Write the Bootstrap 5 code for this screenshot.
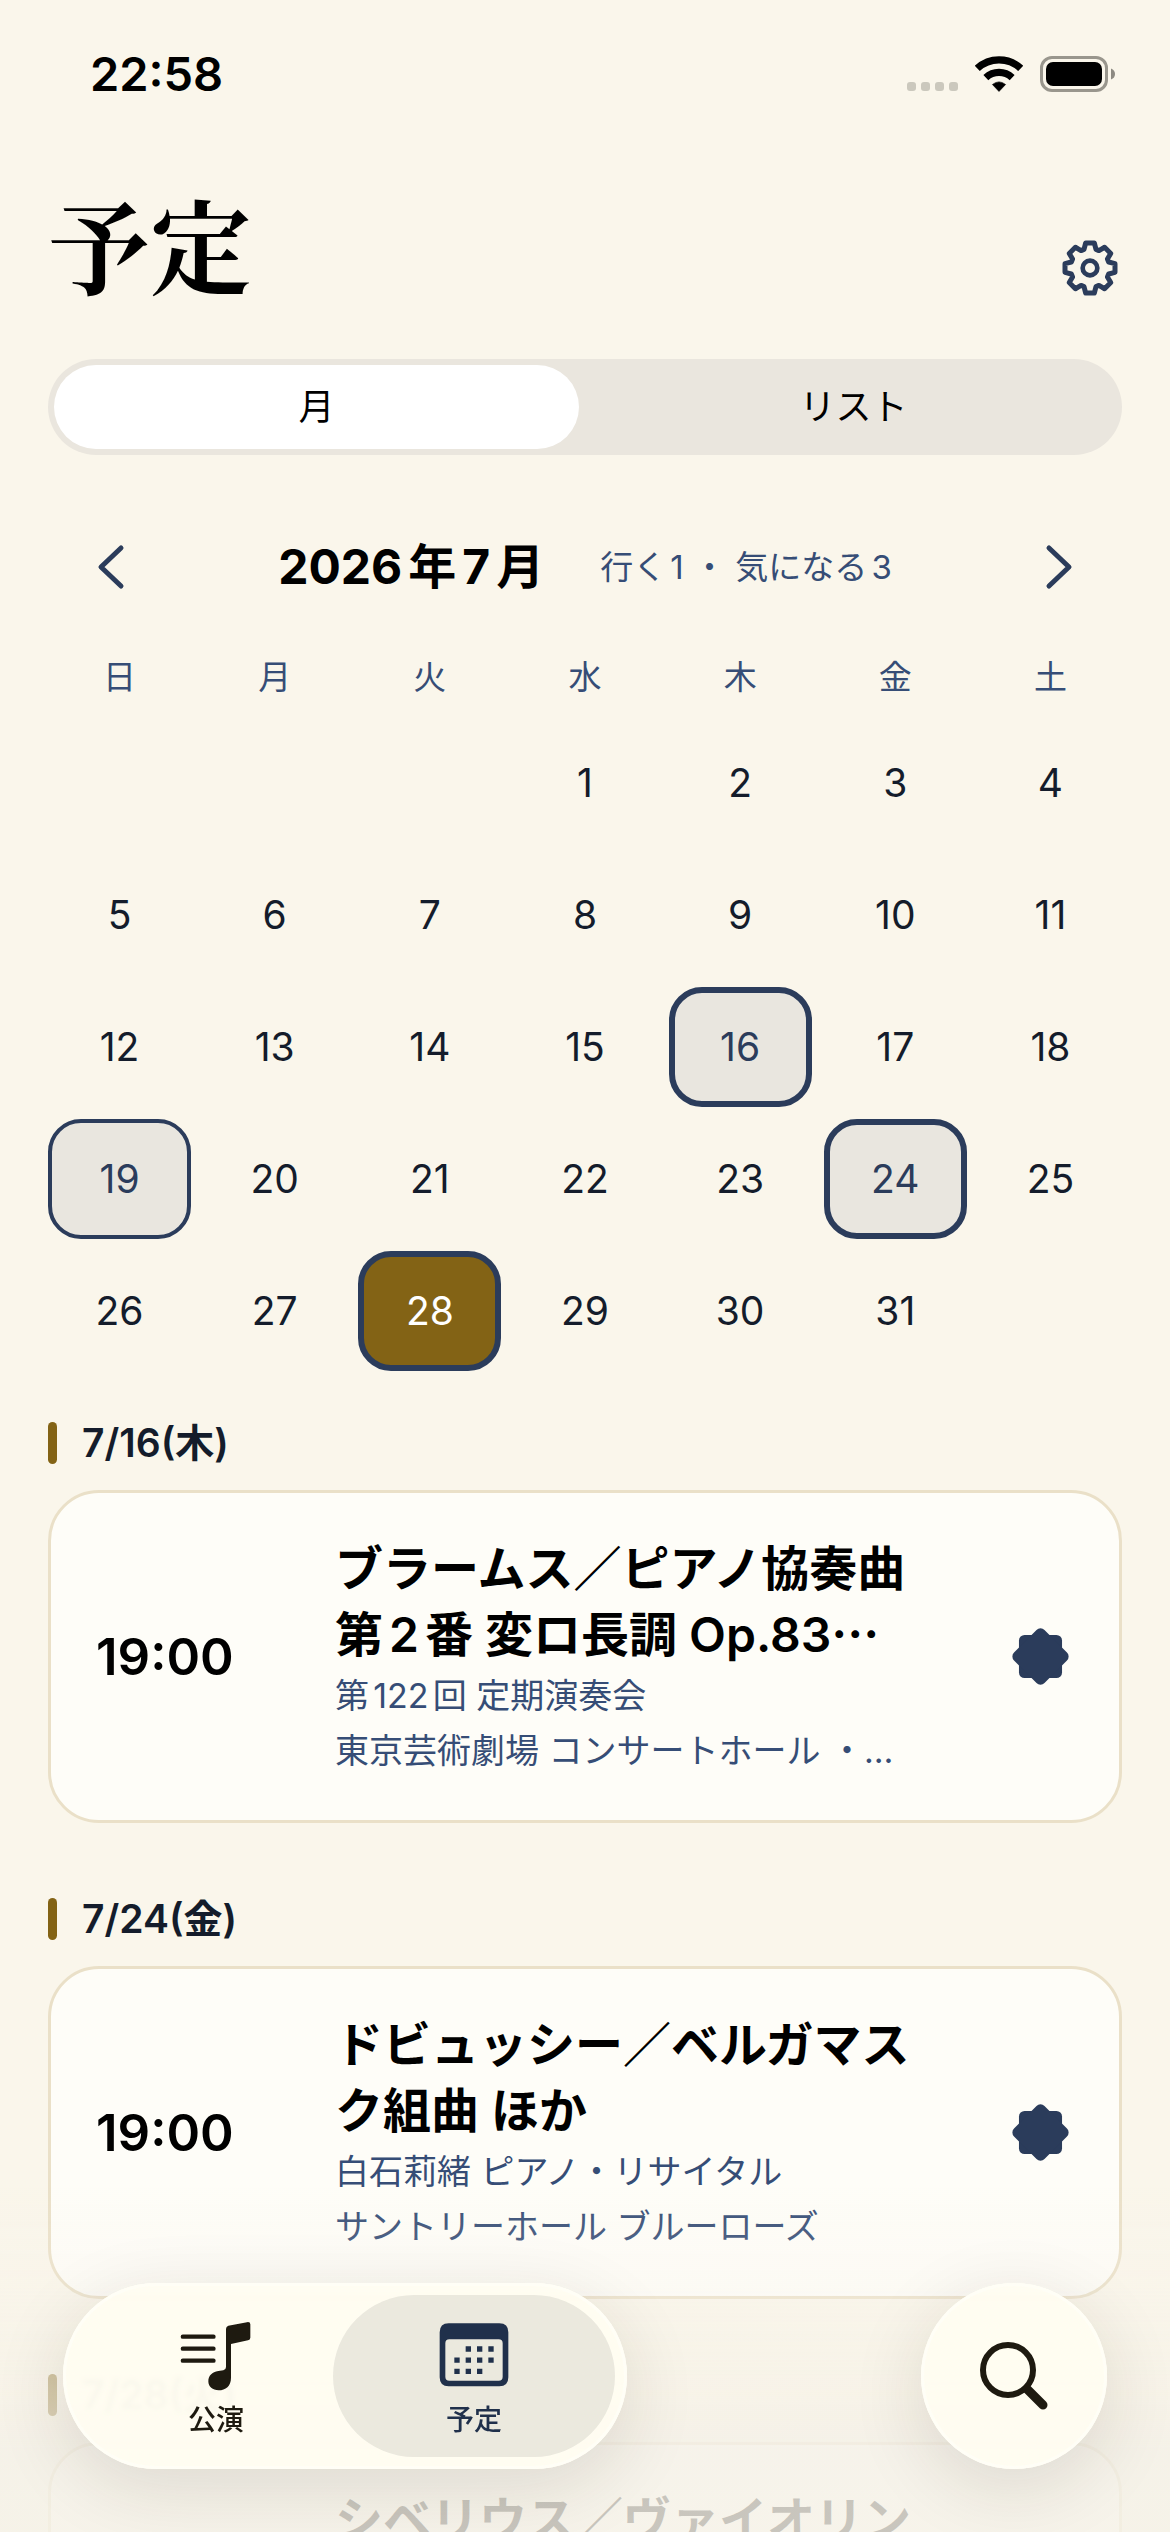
<!DOCTYPE html>
<html lang="ja">
<head>
<meta charset="utf-8">
<meta name="viewport" content="width=device-width, initial-scale=1">
<title>予定</title>
<link href="https://cdn.jsdelivr.net/npm/bootstrap@5.3.0/dist/css/bootstrap.min.css" rel="stylesheet">
<style>
:root { --navy:#2b3c5b; --slate:#364d76; --ink:#141c2b; --gold:#836315; --paper:#faf6eb; --tab:#fffdf1; }
body { font-family: Inter, "Noto Sans CJK JP", sans-serif; background: var(--paper); color:#000; text-autospace: normal; }
button { font-family: inherit; }
.page-x { padding-left:48px; padding-right:48px; }
.statusbar { height:148px; padding:0 55px 0 90px; }
.clock { font-size:47px; font-weight:600; line-height:60px; }
.status-icons { gap:17px; }
.head { padding-top:39px; padding-bottom:60px; }
.head h1 { font-family:"Noto Serif CJK JP","Liberation Serif",serif; font-size:102px; line-height:112px; font-weight:700; }
.icon-btn { border:0; background:none; padding:0; color:var(--navy); line-height:0; }
.gear { margin-bottom:3px; }
.segment { background:#eae6de; border-radius:48px; padding:6px; gap:12px; }
.segment button { height:84px; border:0; border-radius:42px; background:none; font-size:36px; font-weight:400; color:#000; }
.segment button.active { background:#fff; }
.monthbar { height:80px; margin-top:72px; }
.monthbar .icon-btn { width:126px; height:80px; }
.monthbar h2 { font-size:48px; font-weight:700; line-height:66px; }
.tally { font-size:33px; line-height:48px; color:var(--slate); margin-left:56px; }
.cal { display:grid; grid-template-columns:repeat(7,1fr); gap:12px; }
.cal.week { margin:36px 0 12px; }
.cal.week span { height:68px; line-height:68px; text-align:center; font-size:33px; color:var(--slate); }
.day { height:120px; padding:0; border:0 solid var(--navy); border-radius:33px; background:none; font-size:39px; color:var(--ink); }
.day.first { grid-column-start:4; }
.day.has { background:#e9e6df; border-width:6px; color:var(--navy); }
.day.thin { border-width:4px; }
.day.today { background:var(--gold); border-width:6px; color:#fff; }
.daysec { margin-top:51px; }
.daysec + .daysec { margin-top:75px; }
.daysec h3 { font-size:39px; line-height:42px; height:42px; font-weight:600; color:var(--ink); margin:0 0 26px; gap:25px; }
.daysec h3::before { content:""; width:9px; height:42px; border-radius:5px; background:var(--gold); }
.event { min-height:333px; border:3px solid #eae0c8; border-radius:51px; background:#fefdf8; padding:42px 45px; }
.etime { width:239px; font-size:51px; font-weight:600; line-height:66px; }
.ebody { min-width:0; }
.ebody h4 { font-size:48px; line-height:66px; font-weight:600; margin:0; }
.ebody p { font-size:34px; line-height:55px; color:var(--slate); margin:0; }
.dots { font-family:"Noto Sans CJK JP",sans-serif; line-height:1; }
.seal { width:68px; margin-left:76px; }
.veil { height:352px; pointer-events:none; background:linear-gradient(rgba(247,243,233,0), rgba(247,243,233,.22) 30%, rgba(246,242,231,.68) 56%, rgba(244,240,231,.82) 76%, rgba(245,241,231,.82)); }
.dock { padding:0 63px 63px; }
.tabs, .find { background:rgba(255,253,241,.93); backdrop-filter:blur(2px); box-shadow:0 18px 75px rgba(40,34,20,.12), inset 0 0 0 3px #fffef6; }
.tabs { border-radius:93px; padding:12px; }
.tabs a { width:282px; height:162px; border-radius:81px; color:#1e1a10; font-size:28px; font-weight:500; line-height:36px; text-decoration:none; }
.tabs a + a { margin-left:-24px; }
.tabs a.active { background:#ebe9de; color:#20304b; }
.tabs svg { margin-bottom:11px; margin-top:6px; }
.find { width:186px; height:186px; border:0; border-radius:50%; color:#1e1a10; padding:0; }
</style>
<script src="https://cdn.jsdelivr.net/npm/bootstrap@5.3.0/dist/js/bootstrap.bundle.min.js"></script>
</head>
<body>
<svg class="d-none" aria-hidden="true">
  <symbol id="seal" viewBox="-86 -86 172 172"><rect x="-65" y="-65" width="130" height="130" rx="17"/><rect x="-65" y="-65" width="130" height="130" rx="17" transform="rotate(45)"/></symbol>
</svg>
<div class="vh-100 overflow-hidden">
  <div class="statusbar d-flex align-items-center justify-content-between">
    <span class="clock">22:58</span>
    <div class="status-icons d-flex align-items-center">
      <svg width="51" height="36" viewBox="0 0 51 36" fill="#cbc8bd"><rect y="26" width="9" height="9" rx="3"/><rect x="14" y="26" width="9" height="9" rx="3"/><rect x="28" y="26" width="9" height="9" rx="3"/><rect x="42" y="26" width="9" height="9" rx="3"/></svg>
      <svg width="48" height="36" viewBox="-73 -108 146 108" fill="none" stroke="#000" stroke-width="22"><path d="M-66-71A97 97 0 0 1 66-71M-40-43A59 59 0 0 1 40-43"/><path d="M0-1L-20-22Q0-38 20-22Z" fill="#000" stroke-width="2" stroke-linejoin="round"/></svg>
      <svg width="75" height="36" viewBox="0 0 75 36"><rect x="1.500" y="1.500" width="65" height="33" rx="10.500" fill="none" stroke="#99968d" stroke-width="3"/><rect x="6" y="6" width="56" height="24" rx="7"/><path d="M71 12.500Q75 14 75 18T71 23.500Z" fill="#8d8a82"/></svg>
    </div>
  </div>

  <main class="page-x">
    <header class="head d-flex align-items-end justify-content-between">
      <h1 class="m-0">予定</h1>
      <button class="icon-btn gear" type="button" aria-label="設定"><svg width="64" height="56" viewBox="-96 -84 192 168" fill="none" stroke="currentColor" stroke-width="15" stroke-linejoin="round"><path d="M-18-56L-13-75H13L18-56L26.900-52.300L43.800-62.200L62.200-43.800L52.300-26.900L56-18L75-13V13L56 18L52.300 26.900L62.200 43.800L43.800 62.200L26.900 52.300L18 56L13 75H-13L-18 56L-26.900 52.300L-43.800 62.200L-62.200 43.800L-52.300 26.900L-56 18L-75 13V-13L-56-18L-52.300-26.900L-62.200-43.800L-43.800-62.200L-26.900-52.300Z"/><circle r="22" stroke-width="14"/></svg></button>
    </header>

    <div class="segment d-flex" role="group" aria-label="表示">
      <button type="button" class="active flex-fill w-50" aria-pressed="true">月</button>
      <button type="button" class="flex-fill w-50" aria-pressed="false">リスト</button>
    </div>

    <div class="monthbar d-flex align-items-center justify-content-between">
      <button class="icon-btn" type="button" aria-label="前の月"><svg width="28" height="46" viewBox="0 0 28 46" fill="none" stroke="currentColor" stroke-width="5" stroke-linecap="round" stroke-linejoin="round"><path d="M24 4L4 23L24 42"/></svg></button>
      <div class="d-flex align-items-center">
        <h2 class="m-0">2026年7月</h2>
        <span class="tally">行く1 ・ 気になる3</span>
      </div>
      <button class="icon-btn" type="button" aria-label="次の月"><svg width="28" height="46" viewBox="0 0 28 46" fill="none" stroke="currentColor" stroke-width="5" stroke-linecap="round" stroke-linejoin="round"><path d="M4 4L24 23L4 42"/></svg></button>
    </div>

    <div class="cal week"><span>日</span><span>月</span><span>火</span><span>水</span><span>木</span><span>金</span><span>土</span></div>
    <div class="cal">
      <button type="button" class="day first">1</button>
      <button type="button" class="day">2</button>
      <button type="button" class="day">3</button>
      <button type="button" class="day">4</button>
      <button type="button" class="day">5</button>
      <button type="button" class="day">6</button>
      <button type="button" class="day">7</button>
      <button type="button" class="day">8</button>
      <button type="button" class="day">9</button>
      <button type="button" class="day">10</button>
      <button type="button" class="day">11</button>
      <button type="button" class="day">12</button>
      <button type="button" class="day">13</button>
      <button type="button" class="day">14</button>
      <button type="button" class="day">15</button>
      <button type="button" class="day has">16</button>
      <button type="button" class="day">17</button>
      <button type="button" class="day">18</button>
      <button type="button" class="day has thin">19</button>
      <button type="button" class="day">20</button>
      <button type="button" class="day">21</button>
      <button type="button" class="day">22</button>
      <button type="button" class="day">23</button>
      <button type="button" class="day has">24</button>
      <button type="button" class="day">25</button>
      <button type="button" class="day">26</button>
      <button type="button" class="day">27</button>
      <button type="button" class="day today">28</button>
      <button type="button" class="day">29</button>
      <button type="button" class="day">30</button>
      <button type="button" class="day">31</button>
    </div>

    <section class="daysec">
      <h3 class="d-flex align-items-center">7/16(木)</h3>
      <article class="event d-flex align-items-center">
        <div class="etime flex-shrink-0">19:00</div>
        <div class="ebody flex-grow-1">
          <h4>ブラームス／ピアノ協奏曲第2番 変ロ長調 Op.83<span class="dots">…</span></h4>
          <p>第122回 定期演奏会</p>
          <p class="text-nowrap">東京芸術劇場 コンサートホール ・…</p>
        </div>
        <div class="seal flex-shrink-0 text-center"><svg width="57" height="57" fill="#2b3c5b"><use href="#seal"/></svg></div>
      </article>
    </section>

    <section class="daysec">
      <h3 class="d-flex align-items-center">7/24(金)</h3>
      <article class="event d-flex align-items-center">
        <div class="etime flex-shrink-0">19:00</div>
        <div class="ebody flex-grow-1">
          <h4>ドビュッシー／ベルガマスク組曲 ほか</h4>
          <p>白石莉緒 ピアノ・リサイタル</p>
          <p>サントリーホール ブルーローズ</p>
        </div>
        <div class="seal flex-shrink-0 text-center"><svg width="57" height="57" fill="#2b3c5b"><use href="#seal"/></svg></div>
      </article>
    </section>

    <section class="daysec">
      <h3 class="d-flex align-items-center">7/28(火)</h3>
      <article class="event d-flex align-items-start">
        <div class="etime flex-shrink-0"></div>
        <div class="ebody flex-grow-1"><h4>シベリウス／ヴァイオリン</h4></div>
      </article>
    </section>
  </main>
</div>

<div class="veil fixed-bottom"></div>
<div class="dock fixed-bottom d-flex align-items-center justify-content-between">
  <nav class="tabs d-flex">
    <a href="#" class="d-flex flex-column align-items-center justify-content-center">
      <svg width="72" height="70" viewBox="88 92 216 210" fill="currentColor"><path d="M96.500 139H188.500M96.500 175H188.500M96.500 211H188.500" stroke="currentColor" stroke-width="13" stroke-linecap="round"/><path d="M226 116Q226 108 233 106L289 95.500Q299 94 299 102V142Q299 148 292 150L241 161V262C241 287 225 300 204 300C186 300 173 289 173 273C173 256 184 245 203 242L218 240Q226 238 226 230Z"/></svg>
      公演</a>
    <a href="#" class="active d-flex flex-column align-items-center justify-content-center" aria-current="page">
      <svg width="72" height="70" viewBox="868 92 216 210" fill="currentColor"><path fill-rule="evenodd" d="M900 99H1052Q1079 99 1079 126V261Q1079 288 1052 288H900Q873 288 873 261V126Q873 99 900 99ZM902 147Q890 147 890 159V259Q890 271 902 271H1050Q1062 271 1062 259V159Q1062 147 1050 147Z"/><path d="M951 176h85M917 209.500h119M917 243h85" stroke="currentColor" stroke-width="16" stroke-dasharray="16 18"/></svg>
      予定</a>
  </nav>
  <button class="find" type="button" aria-label="検索"><svg width="72" height="72" viewBox="0 0 72 72" fill="none" stroke="currentColor" stroke-linecap="round"><circle cx="30" cy="30" r="25" stroke-width="6"/><path d="M49 49L65 65" stroke-width="9"/></svg></button>
</div>
</body>
</html>
